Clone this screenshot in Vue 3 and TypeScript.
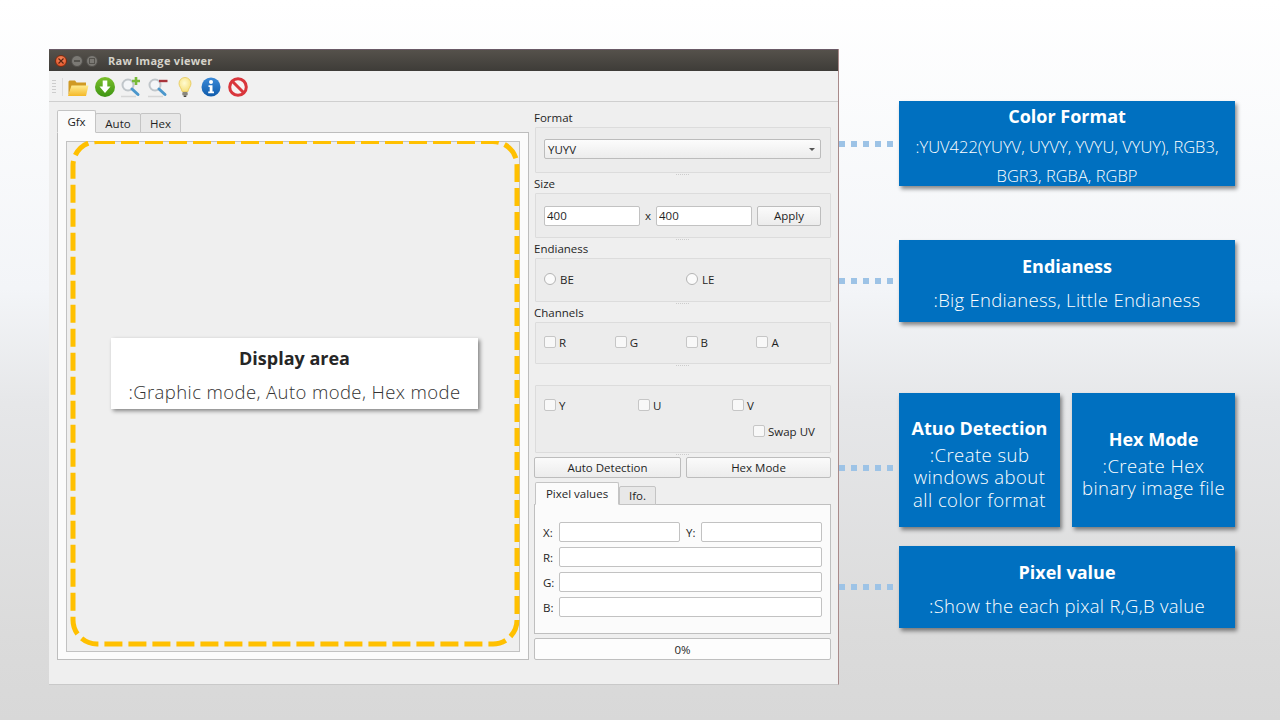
<template>
  <div class="slide">
    <div class="window">
      <div class="titlebar">
        <span class="win-btn close">
          <svg width="8" height="8" viewBox="0 0 8 8"><path d="M1.5 1.5l5 5M6.5 1.5l-5 5" stroke="#5a2412" stroke-width="1.2" /></svg>
        </span>
        <span class="win-btn"><i class="min-mark"></i></span>
        <span class="win-btn"><i class="max-mark"></i></span>
        <span class="win-title">Raw Image viewer</span>
      </div>

      <div class="toolbar">
        <span class="grip"></span>
        <span class="tool-sep"></span>
        <span class="tool">
          <svg width="22" height="22" viewBox="0 0 22 22">
            <defs>
              <linearGradient id="folderFront" x1="0" y1="0" x2="0" y2="1"><stop offset="0" stop-color="#ffec90" /><stop offset="1" stop-color="#f4b828" /></linearGradient>
            </defs>
            <path d="M1.500 19V5.500L2.500 4.500h5.500l1.500 2H19v4H5z" fill="#d09a24" />
            <path d="M1 20l3.500-10.500H21.500L19 20z" fill="url(#folderFront)" />
          </svg>
        </span>
        <span class="tool">
          <svg width="22" height="22" viewBox="0 0 22 22">
            <defs>
              <linearGradient id="greenBall" x1="0" y1="0" x2="0" y2="1"><stop offset="0" stop-color="#7cc02c" /><stop offset="1" stop-color="#3d9412" /></linearGradient>
            </defs>
            <circle cx="11" cy="11" r="10" fill="url(#greenBall)" />
            <path d="M8.700 4.500h4.600v6h3.200L11 17 5.500 10.500h3.200z" fill="#fff" />
          </svg>
        </span>
        <span class="tool">
          <svg width="22" height="22" viewBox="0 0 22 22">
            <circle cx="8" cy="9" r="5.500" fill="#f4f6f8" stroke="#c0c6ca" stroke-width="2" />
            <path d="M12 13l6 5.500" stroke="#4b97cc" stroke-width="3" stroke-linecap="round" />
            <path d="M1 20.500h15" stroke="#d6d6d6" stroke-width="1.500" />
            <path d="M16 1v8M12 5h8" stroke="#78ba38" stroke-width="2.600" />
          </svg>
        </span>
        <span class="tool">
          <svg width="22" height="22" viewBox="0 0 22 22">
            <circle cx="8" cy="9" r="5.500" fill="#f4f6f8" stroke="#c0c6ca" stroke-width="2" />
            <path d="M12 13l6 5.500" stroke="#4b97cc" stroke-width="3" stroke-linecap="round" />
            <path d="M1 20.500h15" stroke="#d6d6d6" stroke-width="1.500" />
            <path d="M12 5h8.500" stroke="#a8343a" stroke-width="2.400" />
          </svg>
        </span>
        <span class="tool">
          <svg width="22" height="22" viewBox="0 0 22 22">
            <defs>
              <radialGradient id="bulb" cx="0.45" cy="0.4" r="0.7"><stop offset="0" stop-color="#fffbd2" /><stop offset="1" stop-color="#f5dc6e" /></radialGradient>
            </defs>
            <path d="M11 1.500a6 6 0 0 0-6 6c0 3 2.400 4.400 3 8h6c.6-3.600 3-5 3-8a6 6 0 0 0-6-6z" fill="url(#bulb)" stroke="#e4c655" stroke-width=".8" />
            <rect x="8.300" y="16" width="5.400" height="3.500" rx="1" fill="#8a877c" />
            <rect x="9.700" y="19.500" width="2.600" height="1.500" fill="#45433e" />
          </svg>
        </span>
        <span class="tool">
          <svg width="22" height="22" viewBox="0 0 22 22">
            <defs>
              <linearGradient id="blueBall" x1="0" y1="0" x2="0" y2="1"><stop offset="0" stop-color="#3b8ad8" /><stop offset="1" stop-color="#0f5bab" /></linearGradient>
            </defs>
            <circle cx="11" cy="11" r="9.500" fill="url(#blueBall)" />
            <circle cx="11" cy="6" r="2" fill="#fff" />
            <path d="M8.500 9.200h4v6.300h1.500v1.800H8.200v-1.800h1.500v-4.500H8.500z" fill="#fff" />
          </svg>
        </span>
        <span class="tool">
          <svg width="22" height="22" viewBox="0 0 22 22">
            <circle cx="11" cy="11" r="8.300" fill="#f6f2f2" stroke="#d9363c" stroke-width="3" />
            <path d="M5 5l12 12" stroke="#d9363c" stroke-width="3" />
          </svg>
        </span>
      </div>

      <div class="content">
        <div class="left">
          <div class="tabs">
            <span v-for="(t, i) in viewTabs" :key="t" class="tab view-tab" :class="{ active: i === 0 }">{{ t }}</span>
          </div>
          <div class="pane">
            <div class="frame">
              <svg class="dash" viewBox="0 0 454 511">
                <rect x="7" y="0.500" width="444" height="502.500" rx="24" fill="none" stroke="#ffc000" stroke-width="5" stroke-dasharray="18 6" />
              </svg>
              <div class="display-card">
                <div class="display-title">Display area</div>
                <div class="display-text">:Graphic mode, Auto mode, Hex mode</div>
              </div>
            </div>
          </div>
        </div>

        <div class="right">
          <div class="label">Format</div>
          <div class="group g-format">
            <div class="combo">
              <span>YUYV</span>
              <i class="caret"></i>
            </div>
          </div>

          <div class="label next">Size</div>
          <div class="group g-size">
            <input class="field size-field" value="400" readonly />
            <span class="times">x</span>
            <input class="field size-field" value="400" readonly />
            <span class="btn apply">Apply</span>
          </div>

          <div class="label next">Endianess</div>
          <div class="group g-endian">
            <span class="opt endian"><i class="radio"></i>BE</span>
            <span class="opt endian"><i class="radio"></i>LE</span>
          </div>

          <div class="label next">Channels</div>
          <div class="group g-rgba">
            <span v-for="c in rgbaChannels" :key="c" class="opt rgba"><i class="check"></i>{{ c }}</span>
          </div>

          <div class="group g-yuv">
            <div class="yuv-row">
              <span v-for="c in yuvChannels" :key="c" class="opt yuv"><i class="check"></i>{{ c }}</span>
            </div>
            <div class="swap-row">
              <span class="opt"><i class="check"></i>Swap UV</span>
            </div>
          </div>

          <div class="actions">
            <span class="btn action auto">Auto Detection</span>
            <span class="btn action hex">Hex Mode</span>
          </div>

          <div class="tabs small">
            <span class="tab active pixel">Pixel values</span>
            <span class="tab info">Ifo.</span>
          </div>
          <div class="pixel-pane">
            <div class="pixel-row">
              <span class="pixel-label">X:</span>
              <input class="field xy" readonly />
              <span class="pixel-label y-label">Y:</span>
              <input class="field xy" readonly />
            </div>
            <div v-for="c in pixelRows" :key="c" class="pixel-row">
              <span class="pixel-label">{{ c }}:</span>
              <input class="field wide" readonly />
            </div>
          </div>
          <div class="progress">0%</div>
        </div>
      </div>
    </div>

    <div class="notes">
      <div v-for="row in notes" :key="row.cards[0].title" class="note-row" :class="row.cls">
        <div class="dots" :class="{ low: row.cls === 'r3' }"><i v-for="n in 5" :key="n"></i></div>
        <div v-for="card in row.cards" :key="card.title" class="note" :class="card.cls">
          <div class="note-title">{{ card.title }}</div>
          <div class="note-text">
            <div v-for="line in card.lines" :key="line">{{ line }}</div>
          </div>
        </div>
      </div>
    </div>
  </div>
</template>

<script setup lang="ts">
interface NoteCard {
  title: string
  lines: string[]
  cls: string
}

interface NoteRow {
  cls: string
  cards: NoteCard[]
}

const viewTabs: string[] = ['Gfx', 'Auto', 'Hex']
const rgbaChannels: string[] = ['R', 'G', 'B', 'A']
const yuvChannels: string[] = ['Y', 'U', 'V']
const pixelRows: string[] = ['R', 'G', 'B']

const notes: NoteRow[] = [
  {
    cls: 'r1',
    cards: [
      {
        title: 'Color Format',
        lines: [':YUV422(YUYV, UYVY, YVYU, VYUY), RGB3,', 'BGR3, RGBA, RGBP'],
        cls: 'format',
      },
    ],
  },
  {
    cls: 'r2',
    cards: [{ title: 'Endianess', lines: [':Big Endianess, Little Endianess'], cls: 'plain' }],
  },
  {
    cls: 'r3',
    cards: [
      { title: 'Atuo Detection', lines: [':Create sub', 'windows about', 'all color format'], cls: 'tall-a' },
      { title: 'Hex Mode', lines: [':Create Hex', 'binary image file'], cls: 'tall-b' },
    ],
  },
  {
    cls: 'r4',
    cards: [{ title: 'Pixel value', lines: [':Show the each pixal R,G,B value'], cls: 'plain' }],
  },
]
</script>

<style>
html,
body {
  margin: 0;
  background: #d9d9d9;
}
</style>

<style scoped>
.slide {
  display: flex;
  width: 1280px;
  height: 720px;
  box-sizing: border-box;
  padding: 49px 0 0 49px;
  overflow: hidden;
  background: linear-gradient(180deg, #ffffff 0%, #f3f5f8 40%, #e6e7e9 56%, #dbdbdb 88%, #d8d8d8 100%);
  font-family: "Open Sans", "Noto Sans", sans-serif;
}

.window {
  display: flex;
  flex-direction: column;
  width: 790px;
  height: 636px;
  box-sizing: border-box;
  background: #efefef;
  border-right: 1px solid #a98a8a;
  border-bottom: 1px solid #c9c9c9;
  color: #1f1f1f;
  font-size: 11.5px;
}

.titlebar {
  display: flex;
  align-items: center;
  height: 22px;
  flex: none;
  padding-left: 6px;
  gap: 3px;
  background: linear-gradient(180deg, #55514b 0%, #3e3c38 100%);
  border-top: 1px solid #6a5a66;
  box-sizing: border-box;
}

.win-btn {
  display: flex;
  align-items: center;
  justify-content: center;
  width: 12px;
  height: 12px;
  border-radius: 50%;
  background: #7b7974;
  border: 1px solid #4f4d49;
  box-sizing: border-box;
  margin-right: 0.5px;
}

.win-btn.close {
  background: radial-gradient(circle at 50% 35%, #f58a5f, #df4a1f);
  border-color: #7c2c10;
}

.min-mark {
  width: 6px;
  height: 2px;
  background: #55534e;
}

.max-mark {
  width: 6px;
  height: 6px;
  box-sizing: border-box;
  border: 1px solid #55534e;
}

.win-title {
  margin-left: 6.500px;
  color: #d6d3ca;
  font-size: 11px;
  font-weight: 700;
  letter-spacing: 0.3px;
}

.toolbar {
  display: flex;
  align-items: center;
  height: 31px;
  flex: none;
  padding: 2px 0 0 3px;
  background: #f1f1f1;
  border-bottom: 1px solid #cfcfcf;
  box-sizing: border-box;
}

.grip {
  width: 4px;
  height: 16px;
  background-image: radial-gradient(circle, #cdcdcd 0.6px, transparent 0.7px);
  background-size: 2px 3px;
}

.tool-sep {
  width: 1px;
  height: 18px;
  margin: 0 2px 0 6px;
  background: #dcdcdc;
}

.tool {
  display: flex;
  align-items: center;
  justify-content: center;
  width: 26.600px;
}

.content {
  display: flex;
  flex: 1;
  padding: 8px 0 0 8px;
  gap: 5px;
}

.left {
  display: flex;
  flex-direction: column;
  width: 472px;
  height: 550px;
}

.tabs {
  display: flex;
  align-items: flex-end;
  height: 23px;
  flex: none;
  position: relative;
  z-index: 1;
  margin-bottom: -1px;
}

.tab {
  display: flex;
  align-items: center;
  justify-content: center;
  height: 20px;
  box-sizing: border-box;
  margin-right: -1px;
  background: #e8e8e8;
  border: 1px solid #c4c4c4;
  border-radius: 2px 2px 0 0;
  font-weight: 500;
  white-space: nowrap;
}

.tab.active {
  height: 23px;
  background: #fbfbfb;
  border-bottom-color: #fbfbfb;
  z-index: 1;
}

.view-tab {
  width: 41px;
}

.view-tab:nth-child(1) {
  width: 39px;
}

.view-tab:nth-child(2) {
  width: 46px;
}

.pane {
  flex: 1;
  padding: 8px 8px 7px 8px;
  background: #fbfbfb;
  border: 1px solid #bdbdbd;
  box-sizing: border-box;
}

.frame {
  position: relative;
  height: 100%;
  box-sizing: border-box;
  background: #efefef;
  border: 1px solid #c2c2c2;
}

.dash {
  position: absolute;
  left: -1px;
  top: -1px;
  width: 454px;
  height: 511px;
}

.display-card {
  position: absolute;
  left: 44px;
  top: 196px;
  width: 367px;
  height: 71px;
  padding-top: 8px;
  box-sizing: border-box;
  background: #ffffff;
  box-shadow: 2px 2px 4px rgba(0, 0, 0, 0.45);
  text-align: center;
  color: #262626;
}

.display-title {
  font-size: 18px;
  font-weight: 700;
  line-height: 25px;
}

.display-text {
  margin-top: 9px;
  font-size: 18.500px;
  letter-spacing: 0.4px;
  line-height: 24px;
  font-weight: 300;
  color: #333333;
  white-space: nowrap;
}

.right {
  display: flex;
  flex-direction: column;
  width: 297px;
  margin-top: 1px;
}

.label {
  height: 16px;
  line-height: 14px;
  flex: none;
  font-weight: 500;
  font-size: 11.500px;
}

.label.next {
  margin-top: 4px;
}

.group {
  position: relative;
  flex: none;
  margin-left: 1px;
  box-sizing: border-box;
  background: #ececec;
  border: 1px solid #dcdcdc;
  border-radius: 1px;
}

.group::after {
  content: "";
  position: absolute;
  left: 50%;
  bottom: -3px;
  width: 14px;
  height: 1px;
  margin-left: -7px;
  background-image: linear-gradient(90deg, #cccccc 50%, transparent 50%);
  background-size: 2px 1px;
}

.g-format {
  height: 46px;
  padding: 11px 9px 0 8px;
}

.combo {
  display: flex;
  align-items: center;
  justify-content: space-between;
  height: 20px;
  box-sizing: border-box;
  padding: 0 5px 0 3px;
  background: linear-gradient(180deg, #fcfcfc, #ececec);
  border: 1px solid #bcbcbc;
  border-radius: 2px;
  font-weight: 500;
}

.caret {
  width: 0;
  height: 0;
  border-left: 3px solid transparent;
  border-right: 3px solid transparent;
  border-top: 3px solid #555555;
}

.g-size {
  display: flex;
  align-items: center;
  height: 45px;
  padding: 0 9px 0 8px;
}

.field {
  display: block;
  height: 20px;
  box-sizing: border-box;
  padding: 0 2px;
  background: #ffffff;
  border: 1px solid #c2c2c2;
  border-radius: 2px;
  outline: none;
  font-family: inherit;
  font-size: 11.500px;
  font-weight: 500;
  color: #1f1f1f;
}

.size-field {
  width: 96px;
}

.times {
  width: 16px;
  text-align: center;
  font-weight: 500;
}

.btn {
  display: flex;
  align-items: center;
  justify-content: center;
  box-sizing: border-box;
  background: linear-gradient(180deg, #fbfbfb, #ececec);
  border: 1px solid #bdbdbd;
  border-radius: 2px;
  font-weight: 500;
}

.apply {
  width: 64px;
  height: 20px;
  margin-left: 5px;
}

.g-endian {
  display: flex;
  align-items: center;
  height: 44px;
  padding: 0 0 2px 8px;
}

.opt {
  display: flex;
  align-items: center;
  font-weight: 500;
}

.endian {
  width: 142px;
}

.radio {
  width: 12px;
  height: 12px;
  margin-right: 4px;
  box-sizing: border-box;
  border: 1px solid #b4b4b4;
  border-radius: 50%;
  background: #fbfbfb;
}

.check {
  width: 12px;
  height: 12px;
  margin-right: 3px;
  box-sizing: border-box;
  border: 1px solid #c6c6c6;
  border-radius: 2px;
  background: #f8f8f8;
}

.g-rgba {
  display: flex;
  height: 42px;
  padding: 12px 0 0 8px;
}

.rgba {
  width: 70.800px;
  height: 14px;
}

.g-yuv {
  height: 68px;
  margin-top: 21px;
  padding: 12px 0 0 8px;
}

.yuv-row {
  display: flex;
}

.yuv {
  width: 94px;
  height: 14px;
}

.swap-row {
  display: flex;
  margin-top: 12px;
  padding-left: 209px;
  height: 14px;
}

.actions {
  display: flex;
  gap: 5px;
  margin-top: 4px;
  flex: none;
}

.action {
  height: 21px;
}

.auto {
  width: 147px;
}

.hex {
  width: 145px;
}

.tabs.small {
  margin-top: 5px;
  height: 22px;
  padding-left: 1px;
}

.tabs.small .tab {
  height: 19px;
  margin-right: 0;
}

.tabs.small .tab.active {
  height: 23px;
}

.pixel {
  width: 84px;
}

.info {
  width: 37px;
}

.pixel-pane {
  flex: none;
  height: 130px;
  padding-top: 17px;
  box-sizing: border-box;
  background: #fbfbfb;
  border: 1px solid #bfbfbf;
}

.pixel-row {
  display: flex;
  align-items: center;
  height: 20px;
  margin-bottom: 5px;
  padding-left: 8px;
}

.pixel-label {
  width: 16px;
  font-weight: 500;
}

.y-label {
  width: 15px;
  margin-left: 6px;
}

.xy {
  width: 121px;
}

.wide {
  width: 263px;
}

.progress {
  height: 22px;
  margin-top: 4px;
  flex: none;
  box-sizing: border-box;
  line-height: 21px;
  text-align: center;
  font-weight: 500;
  background: #fdfdfd;
  border: 1px solid #bfbfbf;
  border-radius: 2px;
}

.notes {
  display: flex;
  flex-direction: column;
}

.note-row {
  display: flex;
  align-items: center;
}

.r1 {
  margin-top: 52px;
  height: 85px;
}

.r2 {
  margin-top: 54px;
  height: 82px;
}

.r3 {
  margin-top: 71px;
  height: 134px;
}

.r4 {
  margin-top: 19px;
  height: 82px;
}

.dots {
  display: flex;
  gap: 6px;
  width: 54px;
  margin-right: 6px;
}

.dots.low {
  margin-top: 16px;
}

.dots i {
  width: 6px;
  height: 6px;
  background: #9dc3e6;
}

.note {
  display: flex;
  flex-direction: column;
  align-items: center;
  justify-content: center;
  width: 336px;
  height: 100%;
  box-sizing: border-box;
  background: #0070c0;
  box-shadow: 2px 3px 4px rgba(0, 0, 0, 0.45);
  color: #ffffff;
  text-align: center;
}

.note-title {
  font-size: 18px;
  font-weight: 700;
  line-height: 25px;
}

.note-text {
  margin-top: 9px;
  font-size: 18.500px;
  letter-spacing: 0.3px;
  line-height: 24px;
  font-weight: 300;
  white-space: nowrap;
}

.plain {
  padding-top: 4px;
}

.format {
  justify-content: flex-start;
  padding-top: 3px;
}

.format .note-text {
  margin-top: 3px;
  font-size: 16.500px;
  letter-spacing: 0;
  line-height: 29px;
}

.tall-a {
  width: 161px;
  padding-top: 7px;
}

.tall-b {
  width: 163px;
  margin-left: 12px;
  padding-top: 6px;
}

.tall-a .note-text,
.tall-b .note-text {
  margin-top: 3px;
  letter-spacing: 0.45px;
  line-height: 22.500px;
}
</style>
